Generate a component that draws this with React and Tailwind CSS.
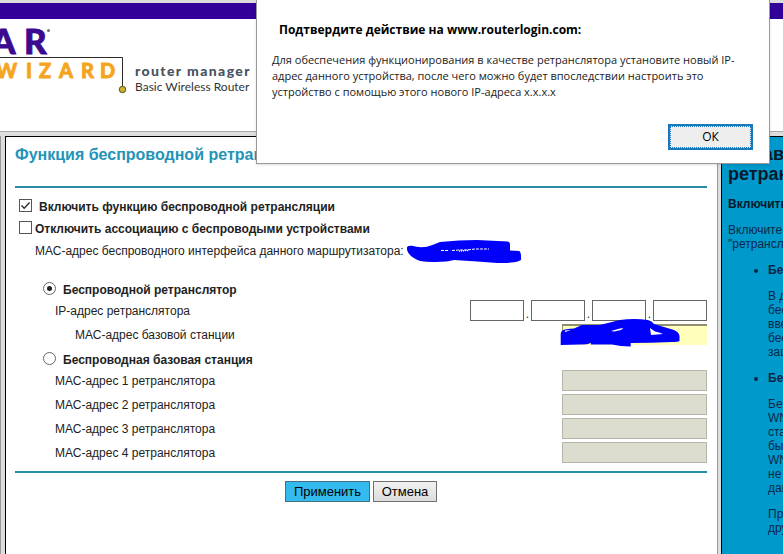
import React from "react";

function Logo() {
  return (
    <svg
      className="h-[70px] w-[127px] flex-none font-['Lato','Open_Sans',sans-serif] font-black"
      viewBox="0 0 127 70"
      aria-label="Net Gear Smart Wizard"
    >
      <text x="-9 24" y="28" fontSize="35" fill="#3b0a8f" stroke="#3b0a8f" strokeWidth="0.800">AR</text>
      <circle cx="48.500" cy="4.500" r="1.500" fill="#6f7480" />
      <text x="-4 26 39 59 81 100" y="52" fontSize="20" fill="#f5a51d" stroke="#f5a51d" strokeWidth="0.800">WIZARD</text>
      <path d="M0 31.500H122.500V60" fill="none" stroke="#2b2b2b" strokeWidth="1" />
      <circle cx="122.500" cy="63.500" r="3.200" fill="#d0b52a" stroke="#4c4a20" strokeWidth="1" />
    </svg>
  );
}

function Check({ id, checked, className, children, gap }) {
  return (
    <div className={`flex items-start ${gap} ${className}`}>
      <span className="relative block size-[13px] flex-none">
        <input
          id={id}
          type="checkbox"
          defaultChecked={checked}
          className="peer block size-[13px] appearance-none border border-[#555] bg-white"
        />
        <svg className="pointer-events-none absolute inset-0 hidden peer-checked:block" viewBox="0 0 13 13">
          <path d="M2.500 6.500L5.200 9.200L10.600 3.600" fill="none" stroke="#333" strokeWidth="1.500" />
        </svg>
      </span>
      <label htmlFor={id} className="mt-px font-bold">{children}</label>
    </div>
  );
}

function Radio({ id, checked, children }) {
  return (
    <div className="flex items-start gap-[7px] pl-7">
      <span className="relative block size-[13px] flex-none">
        <input
          id={id}
          name="mode"
          type="radio"
          defaultChecked={checked}
          className="peer block size-[13px] appearance-none rounded-full border border-[#666] bg-white"
        />
        <span className="pointer-events-none absolute inset-1 hidden rounded-full bg-[#222] peer-checked:block" />
      </span>
      <label htmlFor={id} className="mt-px font-bold">{children}</label>
    </div>
  );
}

function HelpLines({ lines }) {
  return (
    <p>
      {lines.map((line, i) => (
        <span key={i} className="block">{line}</span>
      ))}
    </p>
  );
}

function Help() {
  return (
    <aside className="w-[62px] flex-none overflow-hidden border-t border-l border-black bg-[#0099cc] pt-[7px] pl-[6px] text-[12px] leading-[14px] whitespace-nowrap text-[#0b2848]">
      <h2 className="text-[18px] leading-[20px] font-bold text-[#06182a]">
        <span className="block">Справ</span>
        <span className="block">ретран</span>
      </h2>
      <h3 className="mt-[13px] font-bold text-[#06182a]">Включить</h3>
      <div className="mt-3">
        <HelpLines lines={["Включите", "\"ретрансл"]} />
      </div>
      <ul className="mt-3 list-disc pl-10">
        <li>
          <b>Бе</b>
          <div className="mt-3">
            <HelpLines lines={["В д", "бес", "вве", "бес", "защ"]} />
          </div>
        </li>
        <li className="mt-3">
          <b>Бе</b>
          <div className="mt-3">
            <HelpLines lines={["Бе", "WN", "ста", "бы", "WN", "не", "дан"]} />
          </div>
          <div className="mt-3">
            <HelpLines lines={["Пр", "дру"]} />
          </div>
        </li>
      </ul>
    </aside>
  );
}

function Dialog() {
  return (
    <div
      role="dialog"
      aria-labelledby="dialog-title"
      className="absolute top-0 left-[256px] flex h-[164px] w-[514px] flex-col border border-t-0 border-[#999] bg-white px-[15px] pt-[20px] pb-[13px] font-['Open_Sans','Noto_Sans',sans-serif] text-black shadow-sm"
    >
      <h2 id="dialog-title" className="pl-[7px] text-[12px] leading-[20px] font-bold">
        Подтвердите действие на www.routerlogin.com:
      </h2>
      <p className="mt-3 text-[11px] leading-[16px] whitespace-nowrap text-[#222]">
        Для обеспечения функционирования в качестве ретранслятора установите новый IP-
        <br />
        адрес данного устройства, после чего можно будет впоследствии настроить это
        <br />
        устройство с помощью этого нового IP-адреса x.x.x.x
      </p>
      <button
        type="button"
        className="mt-auto mr-px h-[26px] w-[85px] self-end border-2 border-[#1878bd] bg-[#1878bd] text-[12px]"
      >
        <span className="flex h-full items-center justify-center border border-dotted border-[#1878bd] bg-[#eee]">ОК</span>
      </button>
    </div>
  );
}

export default function App() {
  return (
    <div className="relative flex h-screen flex-col overflow-hidden bg-[#ddd] font-['Liberation_Sans',Arial,sans-serif] text-[12px] leading-[14px] text-[#222]">
      <header className="mt-[3px] h-[129px] flex-none border-b border-[#aaa] bg-white">
        <div className="h-4 bg-[#330099]" />
        <div className="flex pt-[7px]">
          <Logo />
          <div className="pt-[37px] pl-2 font-['Lato','Open_Sans',sans-serif]">
            <p className="text-[14px] leading-4 font-black tracking-widest text-[#4a5360]">router manager</p>
            <p className="text-[12px] leading-4 text-[#333]">Basic Wireless Router</p>
          </div>
        </div>
      </header>

      <div className="mt-1 flex min-h-0 flex-1">
        <div className="w-[5px] flex-none border-l border-[#999]" />
        <main className="min-w-0 flex-1 border-t border-l border-black bg-white pr-[10px] pl-[9px]">
          <h1 className="pt-[8px] text-[16px] leading-[20px] font-bold text-[#2493b8]">
            Функция беспроводной ретрансляции
          </h1>
          <form onSubmit={(e) => e.preventDefault()}>
            <div className="mt-[21px] h-[2px] bg-[#2a8fa6]" />

            <Check id="enable" checked gap="gap-[7px]" className="mt-[11px] pl-1">
              Включить функцию беспроводной ретрансляции
            </Check>
            <Check id="disable" gap="gap-[3px]" className="mt-[7px] pl-1">
              Отключить ассоциацию с беспроводыми устройствами
            </Check>
            <div className="mt-[8px] flex pl-5">
              <span>МАС-адрес беспроводного интерфейса данного маршрутизатора:</span>
              <svg className="-mt-1 -mb-[5px] ml-[3px] h-[23px] w-[115px] flex-none" viewBox="0 0 115 23">
                <path
                  d="M0 7Q1 5.500 5 5.700Q12 8 20 6.700Q26 5 33 2Q52 0 70 0L101 1.500Q103 2 103 4V10.500Q109 10.500 112 11Q114.500 12 114 20Q111 22 107 22.300Q97 23.500 87 22.700Q66 21 47 20Q41 22 33 21.700Q22 22.500 13 21Q2 17 0 10Z"
                  fill="#0000fb"
                />
                <path d="M34 10.500H42M45 10.500L52 10L60 10L68 9H82" fill="none" stroke="#fff" strokeWidth="1" strokeDasharray="3 1" />
                <path d="M52 11.200L62 10.200" fill="none" stroke="#fff" strokeWidth="1.500" strokeDasharray="1 1" />
              </svg>
            </div>

            <div className="mt-[24px]">
              <Radio id="repeater" checked>Беспроводной ретранслятор</Radio>
            </div>
            <fieldset className="mt-[3px] flex items-center justify-between pl-10">
              <legend className="float-left">IP-адрес ретранслятора</legend>
              <div className="ml-auto flex items-end">
                {[1, 2, 3, 4].map((n) => (
                  <React.Fragment key={n}>
                    {n > 1 && <span className="w-[7px] text-center">.</span>}
                    <input aria-label={`IP ${n}`} className="h-[21px] w-[54px] border border-[#666] bg-white px-1" />
                  </React.Fragment>
                ))}
              </div>
            </fieldset>
            <div className="mt-[3px] flex items-center justify-between pl-[60px]">
              <label htmlFor="base">МАС-адрес базовой станции</label>
              <div className="relative">
                <input id="base" className="block h-[21px] w-[145px] border-t-2 border-l border-t-[#8f8f70] border-l-[#8f8f70] bg-[#ffffbb] px-1" />
                <svg className="pointer-events-none absolute -top-2 -left-[2px] h-[32px] w-[120px]" viewBox="0 0 120 32">
                  <path
                    d="M0.700 18Q1 14 5 13.500Q10 12.500 14 12.500Q19 10 22 9H40Q52 6 60 4Q74 2 88 4Q92 5 94 8Q104 11 114 14Q119 16 119.500 20V25Q118 26 112 26Q90 27 70.700 27V30.500Q60 30.500 52 28.500H31V27Q26 29 20 28.500L0.700 29Z"
                    fill="#0000fb"
                  />
                  <path d="M51 15L60 12.500L63.500 12L61 14L54 15.500ZM90 12L95 15.500L99 16.500L103 18L91 19ZM5 14.500V16L11 14Z" fill="#fff" />
                </svg>
              </div>
            </div>

            <div className="mt-[7px]">
              <Radio id="station">Беспроводная базовая станция</Radio>
            </div>
            <div className="mt-[3px] flex flex-col gap-[3px] pl-10">
              {[1, 2, 3, 4].map((n) => (
                <div key={n} className="flex items-center justify-between">
                  <label htmlFor={`mac${n}`}>МАС-адрес {n} ретранслятора</label>
                  <input id={`mac${n}`} disabled className="h-[21px] w-[145px] border border-[#b4b4a8] bg-[#ddddcf] px-1" />
                </div>
              ))}
            </div>

            <div className="mt-[8px] h-[2px] bg-[#2a8fa6]" />
            <div className="mt-[8px] flex justify-center gap-[3px] text-[13px] text-black">
              <button type="submit" className="h-[21px] w-[85px] border border-[#44707f] bg-[#33bbee]">Применить</button>
              <button type="button" className="h-[21px] w-[64px] border border-[#707070] bg-linear-to-b from-[#f2f2f2] to-[#dcdcdc]">Отмена</button>
            </div>
          </form>
        </main>
        <div className="w-[4px] flex-none border-l border-[#999]" />
        <Help />
      </div>

      <Dialog />
    </div>
  );
}
